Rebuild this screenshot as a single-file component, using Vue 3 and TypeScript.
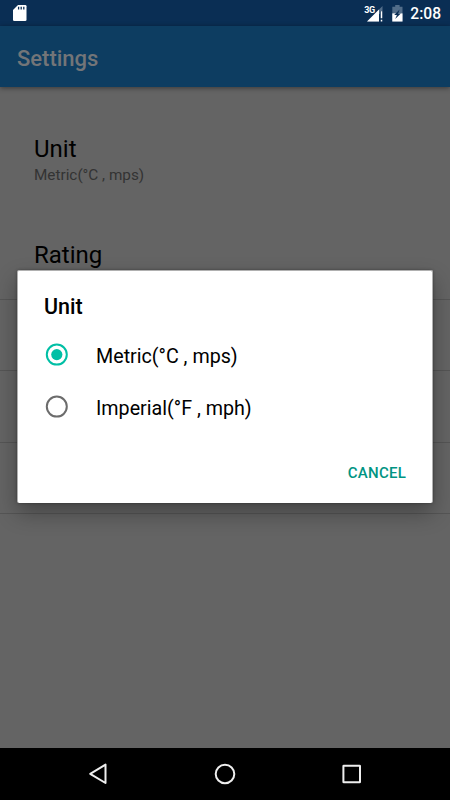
<script setup lang="ts">
import { ref } from 'vue'

interface UnitOption {
  id: string
  label: string
}

const options: UnitOption[] = [
  { id: 'metric', label: 'Metric(°C , mps)' },
  { id: 'imperial', label: 'Imperial(°F , mph)' },
]
const selected = ref('metric')
</script>

<template>
  <div class="screen">
    <header class="status-bar">
      <svg class="sd-card" width="14" height="18" viewBox="0 0 14 18">
        <path d="M5 1H12.2Q13.5 1 13.5 2.3V15.7Q13.5 17 12.2 17H1.3Q0 17 0 15.7V6Z" fill="#fff" />
        <path d="M5.6 2.7V5.6M8.2 2.7V5.6M10.8 2.7V5.6" stroke="#0a2e54" stroke-width="1.3" />
      </svg>
      <div class="status-right">
        <div class="signal">
          <svg width="16" height="16" viewBox="0 0 16 16">
            <path d="M15.5 0V8H12V15.5H0Z" fill="#526d89" />
            <path d="M12 3.5V15.5H0Z" fill="#fff" />
            <path d="M14.4 5.2V15.5" stroke="#0a2e54" stroke-width="3.2" />
            <path d="M14.5 5.2V12.3M14.5 13.7V15.5" stroke="#fff" stroke-width="1.5" />
          </svg>
          <span class="network">3G</span>
        </div>
        <svg class="battery" width="11" height="17" viewBox="0 0 11 17">
          <path d="M3.2 0H7.6V1.7H10.5V16.5H.3V1.7H3.2Z" fill="#526d89" />
          <path d="M.3 8.4H10.5V16.5H.3Z" fill="#fff" />
          <path d="M7.6 4.6L2.2 10H4.9L3.2 14.1L8.8 8.4H6.2Z" fill="#0a2e54" />
        </svg>
        <span class="clock">2:08</span>
      </div>
    </header>

    <div class="app-bar">Settings</div>

    <main class="preferences">
      <section class="pref unit">
        <div class="pref-title">Unit</div>
        <div class="pref-summary">Metric(°C , mps)</div>
      </section>
      <section class="pref rating">
        <div class="pref-title">Rating</div>
      </section>
      <section class="pref row"></section>
      <section class="pref row"></section>
      <section class="pref row"></section>
    </main>

    <nav class="nav-bar">
      <svg width="22" height="22" viewBox="0 0 22 22">
        <path d="M18.5 1.6V20L3.2 10.8Z" />
      </svg>
      <svg width="22" height="22" viewBox="0 0 22 22">
        <circle cx="11" cy="11" r="9.3" />
      </svg>
      <svg width="22" height="22" viewBox="0 0 22 22">
        <rect x="2.4" y="2.7" width="16.6" height="16.6" rx=".4" />
      </svg>
    </nav>

    <div class="dialog" role="dialog">
      <h2 class="dialog-title">Unit</h2>
      <div
        v-for="option in options"
        :key="option.id"
        class="option"
        :class="{ checked: option.id === selected }"
        @click="selected = option.id"
      >
        <svg class="radio" width="24" height="24" viewBox="0 0 24 24">
          <circle class="ring" cx="11.8" cy="11.6" r="10" />
          <circle v-if="option.id === selected" class="dot" cx="11.8" cy="11.6" r="5.6" />
        </svg>
        <span>{{ option.label }}</span>
      </div>
      <div class="actions">
        <button class="cancel" type="button">CANCEL</button>
      </div>
    </div>
  </div>
</template>

<style>
body {
  margin: 0;
}
</style>

<style scoped>
.screen {
  position: relative;
  display: flex;
  flex-direction: column;
  width: 450px;
  height: 800px;
  overflow: hidden;
  background: #646464;
  color: #000;
  font-family: Roboto, "Liberation Sans", sans-serif;
}
.status-bar {
  display: flex;
  flex: none;
  align-items: center;
  justify-content: space-between;
  box-sizing: border-box;
  height: 26px;
  padding: 0 9px 0 13px;
  background: #0a2e54;
}
.status-right {
  display: flex;
  align-items: center;
  padding-top: 1px;
  color: #fff;
}
.signal {
  position: relative;
  display: flex;
  margin-right: 9px;
}
.network {
  position: absolute;
  top: 0;
  left: -3px;
  font-size: 9px;
  font-weight: 700;
  line-height: 9px;
  letter-spacing: -0.5px;
}
.battery {
  margin-right: 7px;
}
.clock {
  font-size: 15.6px;
  font-weight: 500;
  line-height: 28px;
}
.app-bar {
  z-index: 1;
  box-sizing: border-box;
  flex: none;
  height: 61px;
  padding: 2px 17px 0;
  background: #0d3d61;
  color: #737578;
  font-size: 22px;
  font-weight: 500;
  line-height: 61px;
  box-shadow: 0 1px 5px rgba(0, 0, 0, 0.45);
}
.preferences {
  flex: 1;
}
.pref {
  box-sizing: border-box;
  padding: 0 34px;
}
.unit {
  height: 142px;
  padding-top: 47px;
}
.pref-title {
  font-size: 24px;
  line-height: 30px;
}
.pref-summary {
  color: #333;
  font-size: 15.3px;
  line-height: 22px;
}
.rating {
  height: 71px;
  padding-top: 11px;
  border-bottom: 1px solid #555;
}
.row {
  height: 71.3px;
  border-bottom: 1px solid #555;
}
.nav-bar {
  display: grid;
  flex: none;
  grid-template-columns: repeat(3, 22px);
  gap: 105px;
  align-items: center;
  justify-content: center;
  height: 52px;
  background: #000;
}
.nav-bar svg {
  fill: none;
  stroke: #eee;
  stroke-width: 2;
  stroke-linejoin: round;
}
.dialog {
  position: absolute;
  z-index: 2;
  top: 270px;
  left: 17px;
  box-sizing: border-box;
  width: 416px;
  height: 233px;
  padding: 21px 27px 0 27px;
  border: solid #b0b0b0;
  border-width: 1px 1px 0;
  padding: 20px 26px 0;
  border-radius: 2px;
  background: #fff;
  box-shadow: 0 10px 22px rgba(0, 0, 0, 0.32), 0 0 3px rgba(0, 0, 0, 0.35);
}
.dialog-title {
  margin: 0 0 7px;
  font-size: 21.5px;
  font-weight: 500;
  line-height: 31px;
}
.option {
  display: flex;
  align-items: center;
  height: 52px;
  font-size: 19.7px;
}
.option span {
  padding-top: 2px;
}
.radio {
  margin: 0 27px 0 1px;
}
.ring {
  fill: none;
  stroke: #6c6c6c;
  stroke-width: 2;
}
.checked .ring {
  stroke: #00bfa5;
}
.dot {
  fill: #00bfa5;
}
.actions {
  display: flex;
  justify-content: flex-end;
  padding-top: 30px;
}
.cancel {
  padding: 0;
  border: 0;
  background: none;
  color: #009483;
  font-family: inherit;
  font-size: 15px;
  font-weight: 500;
  letter-spacing: 0.25px;
  line-height: 20px;
}
</style>
